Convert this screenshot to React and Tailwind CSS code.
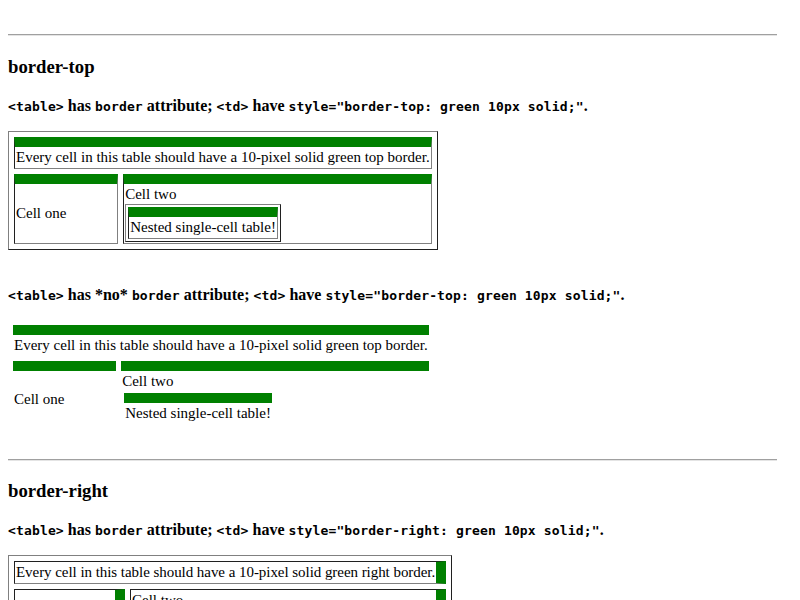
import React from 'react'

const Code = ({ children }) => (
  <code className="font-['DejaVu_Sans_Mono','Liberation_Mono',monospace] text-[13px] leading-[15px] tracking-[0.15px] font-bold">{children}</code>
)

const Rule = () => (
  <div className="h-[2px] border-t border-t-[#a0a0a0] border-b border-b-[#e4e4e4]" />
)

const Heading = ({ children, className = 'mt-5' }) => (
  <h3 className={`${className} text-[18.72px] leading-[22px] font-bold`}>{children}</h3>
)

const Note = ({ children, className = '' }) => (
  <p className={`text-[16px] leading-[19px] font-bold ${className}`}>{children}</p>
)

// table with border attribute: outset frame, inset cells
const framed = 'border-separate border border-t-[#808080] border-l-[#808080] border-r-[#202020] border-b-[#202020]'
const topCell = 'border-t-[10px] border-t-[#008000] border-l border-l-[#202020] border-r border-r-[#808080] border-b border-b-[#808080] p-px'
const rightCell = 'border-r-[10px] border-r-[#008000] border-t border-t-[#202020] border-l border-l-[#202020] border-b border-b-[#808080] p-px'
const plainTop = 'border-t-[10px] border-t-[#008000] p-px'

function TopBorderFramed() {
  return (
    <table className={`${framed} border-spacing-[5px] mt-4`}>
      <tbody>
        <tr>
          <td colSpan={2} className={`${topCell} whitespace-nowrap`}>Every cell in this table should have a 10-pixel solid green top border.</td>
        </tr>
        <tr>
          <td className={`${topCell} w-[104px] align-middle`}>Cell one</td>
          <td className={`${topCell} w-[308px] align-top`}>
            Cell two
            <table className={`${framed} border-spacing-[2px]`}>
              <tbody>
                <tr>
                  <td className={`${topCell} whitespace-nowrap`}>Nested single-cell table!</td>
                </tr>
              </tbody>
            </table>
          </td>
        </tr>
      </tbody>
    </table>
  )
}

function TopBorderPlain() {
  return (
    <table className="border-separate border-spacing-[5px] mt-4">
      <tbody>
        <tr>
          <td colSpan={2} className={`${plainTop} whitespace-nowrap`}>Every cell in this table should have a 10-pixel solid green top border.</td>
        </tr>
        <tr>
          <td className={`${plainTop} w-[103px] align-middle`}>Cell one</td>
          <td className={`${plainTop} w-[307px] align-top`}>
            Cell two
            <table className="border-separate border-spacing-[2px]">
              <tbody>
                <tr>
                  <td className={`${plainTop} whitespace-nowrap`}>Nested single-cell table!</td>
                </tr>
              </tbody>
            </table>
          </td>
        </tr>
      </tbody>
    </table>
  )
}

function RightBorderFramed() {
  return (
    <table className={`${framed} border-spacing-[5px] mt-4`}>
      <tbody>
        <tr>
          <td colSpan={2} className={`${rightCell} whitespace-nowrap tracking-[-0.05px]`}>Every cell in this table should have a 10-pixel solid green right border.</td>
        </tr>
        <tr>
          <td className={`${rightCell} w-[111px] align-middle`}>Cell one</td>
          <td className={`${rightCell} w-[316px] align-top`}>
            Cell two
            <table className={`${framed} border-spacing-[2px]`}>
              <tbody>
                <tr>
                  <td className={`${rightCell} whitespace-nowrap`}>Nested single-cell table!</td>
                </tr>
              </tbody>
            </table>
          </td>
        </tr>
      </tbody>
    </table>
  )
}

export default function App() {
  return (
    <div className="h-[600px] w-[800px] overflow-hidden bg-white text-black font-['Liberation_Serif','Times_New_Roman',serif] text-[15px] leading-[19px]">
      <div className="w-[785px] px-2 pt-[34px]">
        <Rule />
        <Heading>border-top</Heading>
        <Note className="mt-[18px]">
          <Code>&lt;table&gt;</Code> has <Code>border</Code> attribute; <Code>&lt;td&gt;</Code> have <Code>style="border-top: green 10px solid;"</Code>.
        </Note>
        <TopBorderFramed />
        <Note className="mt-[35px]">
          <Code>&lt;table&gt;</Code> has *no* <Code>border</Code> attribute; <Code>&lt;td&gt;</Code> have <Code>style="border-top: green 10px solid;"</Code>.
        </Note>
        <TopBorderPlain />
        <div className="mt-[27px]">
          <Rule />
        </div>
        <Heading className="mt-[19px]">border-right</Heading>
        <Note className="mt-[18px]">
          <Code>&lt;table&gt;</Code> has <Code>border</Code> attribute; <Code>&lt;td&gt;</Code> have <Code>style="border-right: green 10px solid;"</Code>.
        </Note>
        <RightBorderFramed />
      </div>
    </div>
  )
}
